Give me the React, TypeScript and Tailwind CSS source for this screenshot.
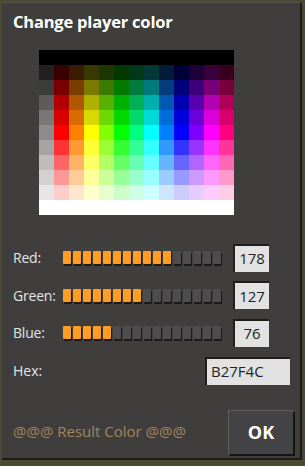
import React from 'react';

// Palette: 13 columns (gray + 12 hues), 11 rows (black, 9 shades, white)
const HUES = [0, 30, 60, 90, 120, 150, 180, 210, 240, 270, 300, 330];
const DARK = [0.22, 0.48, 0.69, 0.85];
const LIGHT = [0.2, 0.4, 0.6, 0.8];
const GRAYS = [32, 60, 92, 120, 140, 165, 190, 210, 230];

function hueRgb(h: number): [number, number, number] {
    const f = (n: number) => {
        const k = (n + h / 60) % 6;
        return 1 - Math.max(0, Math.min(k, 4 - k, 1));
    };
    return [f(5) * 255, f(3) * 255, f(1) * 255];
}

function cellColor(row: number, hue: number): string {
    const [r, g, b] = hueRgb(hue);
    let c: number[];
    if (row < 4) c = [r, g, b].map(v => v * DARK[row]);
    else if (row === 4) c = [r, g, b];
    else {
        const t = LIGHT[row - 5];
        c = [r, g, b].map(v => v + (255 - v) * t);
    }
    return `rgb(${c.map(Math.round).join(',')})`;
}

interface SliderProps {
    label: string;
    value: number;
}

const Slider: React.FC<SliderProps> = ({ label, value }) => {
    const on = Math.round((value / 255) * 16);
    return (
        <div className="flex items-center h-[28px]">
            <span className="w-[50px] text-[14px] text-[#e4e4e4] tracking-[-0.2px]">{label}</span>
            <div className="flex gap-[2px] w-[160px]">
                {Array.from({ length: 16 }).map((_, i) => (
                    <div
                        key={i}
                        className={
                            i < on
                                ? "w-[8px] h-[13px] rounded-[1px] bg-[#fd9d22] shadow-[1px_2px_0_#1b1a18]"
                                : "w-[8px] h-[13px] rounded-[1px] bg-[#4d4d50] shadow-[1px_2px_0_#1b1a18]"
                        }
                    />
                ))}
            </div>
            <div className="ml-[10px] w-[36px] h-[28px] bg-[#e2e2e2] border-t-2 border-l-2 border-[#1f1e1c] flex items-center justify-center text-[15px] text-[#222]">
                {value}
            </div>
        </div>
    );
};

export default function App() {
    return (
        <div className="w-[305px] h-[466px] bg-[#4a4932] pt-[2px] pl-[2px]" style={{ fontFamily: '"Open Sans", sans-serif' }}>
            <div className="w-[300px] h-[458px] bg-[#403e3c] border-r-2 border-b-2 border-[#1d1c1a] border-t border-t-[#57554f] flex flex-col">
                <h1 className="text-[16.5px] font-bold text-white leading-none mt-[11px] ml-[11px] tracking-[-0.2px]">Change player color</h1>

                <div className="ml-[37px] mt-[19px] w-[195px] flex flex-col">
                    <div className="h-[15px] bg-black" />
                    {Array.from({ length: 9 }).map((_, row) => (
                        <div key={row} className="flex h-[15px]">
                            <div className="w-[15px]" style={{ background: `rgb(${GRAYS[row]},${GRAYS[row]},${GRAYS[row]})` }} />
                            {HUES.map(h => (
                                <div key={h} className="w-[15px]" style={{ background: cellColor(row, h) }} />
                            ))}
                        </div>
                    ))}
                    <div className="h-[15px] bg-white" />
                </div>

                <div className="ml-[11px] mt-[29px] flex flex-col gap-[9.5px]">
                    <Slider label="Red:" value={178} />
                    <Slider label="Green:" value={127} />
                    <Slider label="Blue:" value={76} />
                </div>

                <div className="ml-[11px] mt-[10px] flex items-center h-[28px]">
                    <span className="text-[14px] text-[#e4e4e4] flex-1">Hex:</span>
                    <div className="mr-[10px] w-[85px] h-[28px] bg-[#e2e2e2] border-t-2 border-l-2 border-[#1f1e1c] flex items-center pl-[4px] text-[15px] text-[#222]">
                        B27F4C
                    </div>
                </div>

                <div className="ml-[11px] mt-[25px] flex items-center">
                    <span className="flex-1 text-[15px] text-[#a3865e]">@@@ Result Color @@@</span>
                    <button className="mr-[7px] w-[65px] h-[44px] bg-[#434346] border-t border-l border-[#606064] shadow-[2px_2px_0_#141414] text-white font-bold text-[18px]">
                        OK
                    </button>
                </div>
            </div>
        </div>
    );
}
